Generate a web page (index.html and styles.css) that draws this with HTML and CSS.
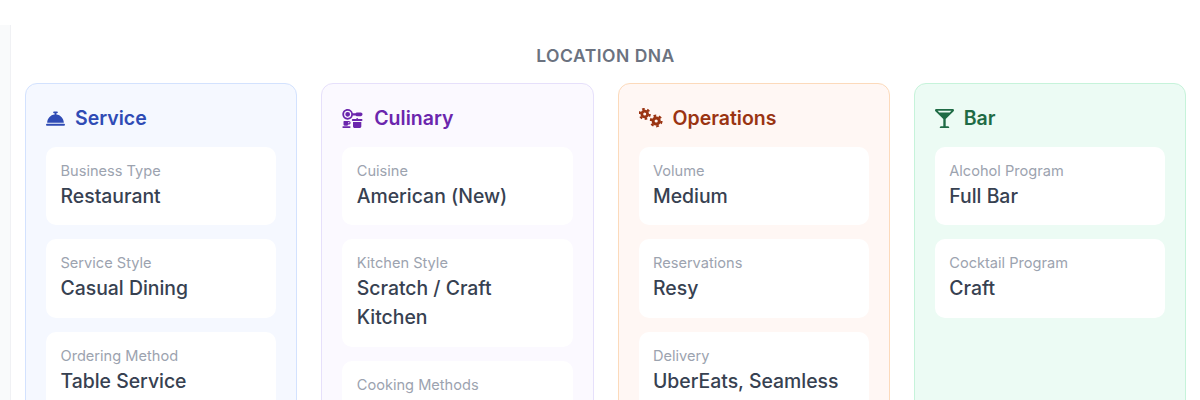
FILE: index.html
```html
<!DOCTYPE html>
<html lang="en">
<head>
  <meta charset="UTF-8">
  <title>Location DNA</title>
  <link rel="stylesheet" href="styles.css">
</head>
<body>
  <div class="page">
    <aside class="sidebar"></aside>
    <main class="content">
      <h2 class="section-title">LOCATION DNA</h2>
      <div class="dna-grid">

        <section class="card card-service">
          <h3 class="card-title">
            <svg class="icon" viewBox="0 0 512 512"><path d="M216 64c-13.3 0-24 10.7-24 24s10.7 24 24 24h16v33.3C119.6 157.2 32 252.4 32 368H480c0-115.6-87.6-210.8-200-222.7V112h16c13.3 0 24-10.7 24-24s-10.7-24-24-24H256 216zM24 400c-13.3 0-24 10.7-24 24s10.7 24 24 24H488c13.3 0 24-10.7 24-24s-10.7-24-24-24H24z"/></svg>
            Service
          </h3>
          <div class="item"><div class="label">Business Type</div><div class="value">Restaurant</div></div>
          <div class="item"><div class="label">Service Style</div><div class="value">Casual Dining</div></div>
          <div class="item"><div class="label">Ordering Method</div><div class="value">Table Service</div></div>
        </section>

        <section class="card card-culinary">
          <h3 class="card-title">
            <svg class="icon icon-kitchen" viewBox="0 0 576 512"><path d="M240 144A96 96 0 1 0 48 144a96 96 0 1 0 192 0zm44.4 32C269.9 240.1 212.5 288 144 288C64.5 288 0 223.5 0 144S64.5 0 144 0c68.5 0 125.9 47.9 140.4 112h71.8c8.8-9.8 21.6-16 35.8-16H496c26.5 0 48 21.5 48 48s-21.5 48-48 48H392c-14.2 0-27-6.2-35.8-16H284.4zM144 80a64 64 0 1 1 0 128 64 64 0 1 1 0-128zM400 240c13.3 0 24 10.7 24 24v8h96c13.3 0 24 10.7 24 24s-10.7 24-24 24H280c-13.3 0-24-10.7-24-24s10.7-24 24-24h96v-8c0-13.3 10.7-24 24-24zM288 464V352H512V464c0 26.5-21.5 48-48 48H336c-26.5 0-48-21.5-48-48zM48 320h80 16 32c26.5 0 48 21.5 48 48s-21.5 48-48 48H160c0 17.7-14.3 32-32 32H64c-17.7 0-32-14.3-32-32V336c0-8.8 7.2-16 16-16zm128 64c8.8 0 16-7.2 16-16s-7.2-16-16-16H160v32h16zM24 464H200c13.3 0 24 10.7 24 24s-10.7 24-24 24H24c-13.3 0-24-10.7-24-24s10.7-24 24-24z"/></svg>
            Culinary
          </h3>
          <div class="item"><div class="label">Cuisine</div><div class="value">American (New)</div></div>
          <div class="item"><div class="label">Kitchen Style</div><div class="value">Scratch / Craft Kitchen</div></div>
          <div class="item"><div class="label">Cooking Methods</div></div>
        </section>

        <section class="card card-operations">
          <h3 class="card-title">
            <svg class="icon icon-gears" viewBox="0 0 24 20" fill="none" stroke="currentColor">
              <circle cx="5.7" cy="6" r="5" stroke-width="2.2" pathLength="60" stroke-dasharray="5 5"/>
              <circle cx="5.7" cy="6" r="2.9" stroke-width="2.8"/>
              <circle cx="17.2" cy="13" r="5.3" stroke-width="2.2" pathLength="60" stroke-dasharray="5 5"/>
              <circle cx="17.2" cy="13" r="3.1" stroke-width="3"/>
            </svg>
            Operations
          </h3>
          <div class="item"><div class="label">Volume</div><div class="value">Medium</div></div>
          <div class="item"><div class="label">Reservations</div><div class="value">Resy</div></div>
          <div class="item"><div class="label">Delivery</div><div class="value">UberEats, Seamless</div></div>
        </section>

        <section class="card card-bar">
          <h3 class="card-title">
            <svg class="icon" viewBox="0 0 512 512"><path d="M502.05 57.6C523.3 36.34 508.25 0 478.2 0H33.8C3.75 0-11.3 36.34 9.95 57.6L224 271.64V464h-56c-22.09 0-40 17.91-40 40 0 4.42 3.58 8 8 8h240c4.42 0 8-3.58 8-8 0-22.09-17.91-40-40-40h-56V271.64L502.05 57.6zM443.77 48l-48 48H116.24l-48-48h375.53z"/></svg>
            Bar
          </h3>
          <div class="item"><div class="label">Alcohol Program</div><div class="value">Full Bar</div></div>
          <div class="item"><div class="label">Cocktail Program</div><div class="value">Craft</div></div>
        </section>

      </div>
    </main>
  </div>
</body>
</html>
```

FILE: styles.css
```css
* {
  box-sizing: border-box;
  margin: 0;
  padding: 0;
}

html, body {
  height: 400px;
  overflow: hidden;
}

body {
  background: #fff;
  font-family: Inter, "Liberation Sans", sans-serif;
  color: #374151;
}

.page {
  display: flex;
  height: 100%;
}

.sidebar {
  width: 11px;
  flex: none;
  margin-top: 25px;
  background: #f9fafb;
  border-right: 1px solid #f0f1f4;
}

.content {
  flex: 1;
  padding: 44px 14px 0 14px;
}

.section-title {
  font-size: 17.5px;
  line-height: 24px;
  font-weight: 600;
  letter-spacing: 0.5px;
  text-align: center;
  color: #6b7280;
  margin-bottom: 15px;
}

.dna-grid {
  display: grid;
  grid-template-columns: repeat(4, 1fr);
  gap: 24px;
  align-items: stretch;
}

.card {
  display: flex;
  flex-direction: column;
  gap: 14px;
  min-height: 400px;
  padding: 20px;
  border: 1px solid;
  border-radius: 12px;
}

.card-service { background: #f5f8ff; border-color: #d3e2fe; color: #2f4bb5; }
.card-culinary { background: #fbf9ff; border-color: #e6e0fb; color: #6b26ad; }
.card-operations { background: #fff7f4; border-color: #fcdabb; color: #9a3412; }
.card-bar { background: #ecfbf4; border-color: #c6f3da; color: #1f6b45; }

.card-title {
  display: flex;
  align-items: center;
  gap: 10px;
  height: 28px;
  margin-bottom: 1px;
  font-size: 19.5px;
  line-height: 28px;
  font-weight: 600;
}

.icon {
  width: 19px;
  height: 19px;
  flex: none;
  fill: currentColor;
}

.icon-kitchen {
  width: 22px;
}

.icon-gears {
  width: 24px;
  height: 20px;
  fill: none;
}

.item {
  padding: 13px 15px 14.25px 14.5px;
  background: #fff;
  border-radius: 10px;
}

.label {
  font-size: 14.6px;
  line-height: 22px;
  color: #9ca3af;
}

.value {
  font-size: 19.4px;
  line-height: 29px;
  font-weight: 500;
  color: #374151;
}
```
